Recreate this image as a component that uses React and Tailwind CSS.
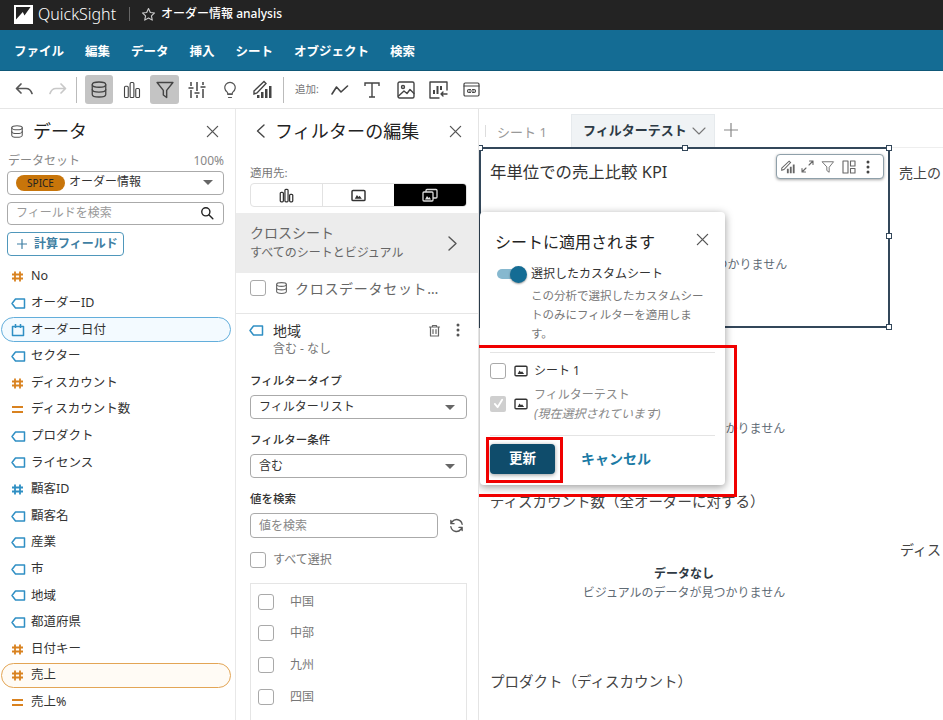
import React from "react";

const S = ({ w = 18, h = 18, vb = "0 0 24 24", c = "#444", sw = 2, children, className = "" }) => (
  <svg width={w} height={h} viewBox={vb} fill="none" stroke={c} strokeWidth={sw} strokeLinecap="round" strokeLinejoin="round" className={`shrink-0 ${className}`}>
    {children}
  </svg>
);

const Db = ({ w = 16, h = 16, c = "#555", sw = 1.8 }) => (
  <S w={w} h={h} c={c} sw={sw}>
    <ellipse cx="12" cy="5.5" rx="9" ry="3.5" />
    <path d="M3 5.5v13c0 2 4 3.5 9 3.5s9-1.5 9-3.5v-13" />
    <path d="M3 12c0 2 4 3.5 9 3.5s9-1.5 9-3.5" />
  </S>
);
const Bars = ({ w = 18, h = 18, c = "#444", sw = 1.5 }) => (
  <S w={w} h={h} c={c} sw={sw}>
    <rect x="2" y="7" width="5" height="15" rx="1.5" />
    <rect x="9.5" y="2" width="5" height="20" rx="1.5" />
    <rect x="17" y="10" width="5" height="12" rx="1.5" />
  </S>
);
const Funnel = ({ w = 20, h = 20, c = "#444", sw = 1.7 }) => (
  <S w={w} h={h} c={c} sw={sw}>
    <path d="M2.500 3h19l-7.500 9.500V21l-4-3v-5.500z" />
  </S>
);
const Sheet = ({ w = 15, h = 13, c = "#333" }) => (
  <svg width={w} height={h} viewBox="0 0 16 14" className="shrink-0">
    <rect x="1" y="1.5" width="14" height="11" rx="1.2" fill="none" stroke={c} strokeWidth="1.6" />
    <path d="M4 10.5 6.3 6.5 8 8.6 9.2 7.4 11.6 10.5z" fill={c} />
  </svg>
);
const Close = ({ s = 13, c = "#555" }) => (
  <S w={s} h={s} c={c} sw={1.4} vb="0 0 14 14">
    <path d="M1.5 1.5l11 11M12.5 1.5l-11 11" />
  </S>
);
const Caret = () => <span className="ml-auto h-0 w-0 border-x-[5px] border-t-[5px] border-x-transparent border-t-[#666]" />;
const Box = ({ className = "" }) => <span className={`block h-4 w-4 shrink-0 rounded-[3px] border-[1.5px] border-[#a9a9a9] bg-white ${className}`} />;

const Tag = ({ c = "#2f8fc4" }) => (
  <S w={15} h={13} vb="0 0 15 13" c={c} sw={1.5}>
    <path d="M4.5 2h9v9h-9L1 6.5z" />
  </S>
);
const Hash = ({ c = "#d9821f" }) => (
  <S w={13} h={13} vb="0 0 13 13" c={c} sw={1.8}>
    <path d="M4 1.5v10M9 1.5v10M1 4.5h11M1 8.5h11" strokeLinecap="butt" />
  </S>
);
const Eq = () => (
  <S w={13} h={13} vb="0 0 13 13" c="#d9821f" sw={1.8}>
    <path d="M1 4h11M1 9h11" strokeLinecap="butt" />
  </S>
);
const Cal = () => (
  <S w={14} h={14} vb="0 0 14 14" c="#2f8fc4" sw={1.5}>
    <path d="M1.5 3.500h11v9h-11zM4.500 1v4M9.500 1v4" strokeLinecap="butt" />
  </S>
);

const fields = [
  ["No", "h"], ["オーダーID", "t"], ["オーダー日付", "d", "blue"], ["セクター", "t"], ["ディスカウント", "h"],
  ["ディスカウント数", "e"], ["プロダクト", "t"], ["ライセンス", "t"], ["顧客ID", "b"], ["顧客名", "t"], ["産業", "t"],
  ["市", "t"], ["地域", "t"], ["都道府県", "t"], ["日付キー", "h"], ["売上", "h", "orange"], ["売上%", "e"],
];
const icon = { h: <Hash />, t: <Tag />, d: <Cal />, b: <Hash c="#2f8fc4" />, e: <Eq /> };

function FieldRow({ name, type, hl }) {
  const cls =
    hl === "blue"
      ? "border border-[#63aedb] bg-[#f3faff] rounded-full"
      : hl === "orange"
        ? "border border-[#e3a555] bg-[#fffbf5] rounded-full"
        : "border border-transparent";
  return (
    <div className="flex h-[26.6px] items-center">
      <div className={`ml-px -mt-px flex h-[25px] w-[230px] items-center pl-[9px] ${cls}`}>
        <span className="flex w-[20px] justify-start">{icon[type]}</span>
        <span className="text-[12.5px] text-[#333]">{name}</span>
      </div>
    </div>
  );
}

function TopBar() {
  return (
    <>
      <div className="flex h-[30px] items-center bg-[#232323] pb-[2px] pl-[14px] text-white">
        <svg width="19" height="19" viewBox="0 0 19 19" className="shrink-0">
          <rect width="19" height="19" fill="#fff" />
          <path d="M2 2h14.500L10.500 10.500 8.800 7 2 14.500z" fill="#232323" />
        </svg>
        <span className="ml-[5px] text-[16px] font-light leading-none">QuickSight</span>
        <span className="ml-[13px] h-[14px] w-px bg-[#666]" />
        <svg width="15" height="15" viewBox="0 0 24 24" fill="none" stroke="#ccc" strokeWidth="1.8" strokeLinejoin="round" className="ml-[11px]">
          <path d="M12 2.5l2.9 6.2 6.8.8-5 4.7 1.3 6.8-6-3.4-6 3.4 1.3-6.8-5-4.7 6.8-.8z" />
        </svg>
        <span className="ml-[5px] text-[12px] font-medium">オーダー情報 analysis</span>
      </div>
      <div className="flex h-[41px] items-center gap-[21px] border-b border-[#0f5878] bg-[#146c94] pl-[14px] pt-[5px] text-[12.5px] font-bold text-white">
        {["ファイル", "編集", "データ", "挿入", "シート", "オブジェクト", "検索"].map((m) => (
          <span key={m}>{m}</span>
        ))}
      </div>
      <div className="flex h-[38px] items-center border-b border-[#e6e6e6] bg-white pl-[15px]">
        <S w={19} h={16} vb="0 0 19 16" c="#555" sw={1.7}><path d="M6 2 1.500 6.500 6 11M2 6.500h9c3 0 5 2 6 5" /></S>
        <S w={19} h={16} vb="0 0 19 16" c="#c8c8c8" sw={1.7} className="ml-[14px]"><path d="M13 2l4.500 4.500L13 11M17 6.500H8c-3 0-5 2-6 5" /></S>
        <span className="ml-[9px] h-[26px] w-px bg-[#bbb]" />
        <span className="ml-[8px] flex h-[29px] w-[28px] items-center justify-center rounded-[3px] bg-[#c4c4c4]"><Db w={18} h={19} c="#444" sw={1.7} /></span>
        <span className="ml-[10px]"><Bars /></span>
        <span className="ml-[9px] flex h-[29px] w-[29px] items-center justify-center rounded-[3px] bg-[#c4c4c4]"><Funnel /></span>
        <svg width="18" height="18" viewBox="0 0 18 18" className="ml-[9px] shrink-0" fill="none" stroke="#444" strokeWidth="1.500" strokeLinecap="butt">
          <path d="M3 1v4M3 9v8M9 1v9M9 14v3M15 1v3M15 8v9M.5 7h5M6.500 12h5M12.500 6h5" />
        </svg>
        <S w={18} h={20} c="#555" sw={1.6} className="ml-[15px]"><path d="M9 18h6M10 22h4M8 14.500A7 7 0 1 1 16 14.500c-.7.7-1 1.500-1 2.500H9c0-1-.3-1.800-1-2.500z" /></S>
        <svg width="19" height="19" viewBox="0 0 19 19" className="ml-[14px] shrink-0">
          <path d="M1 11 11 1.500l2 2L4 13l-3 1z" fill="none" stroke="#444" strokeWidth="1.4" />
          <path d="M8 12h2.500v6H8zM12 9h2.500v9H12zM16 6h2.500v12H16zM4 15h2.500v3H4z" fill="#444" />
        </svg>
        <span className="ml-[11px] h-[26px] w-px bg-[#bbb]" />
        <span className="ml-[11px] text-[10.5px] text-[#777]">追加:</span>
        <S w={18} h={12} vb="0 0 18 12" c="#444" sw={1.6} className="ml-[12px]"><path d="M1 10 5.500 3 10 8l6.500-6" /></S>
        <svg width="16" height="16" viewBox="0 0 16 16" className="ml-[15px] shrink-0" fill="none" stroke="#444" strokeWidth="1.4"><path d="M1 4V1h14v3M8 1v14M5 15h6" /></svg>
        <S w={18} h={18} vb="0 0 18 18" c="#444" sw={1.4} className="ml-[17px]"><rect x="1" y="1" width="16" height="16" rx="1.500" /><circle cx="6" cy="6" r="1.500" /><path d="M1.500 15 7 10l3 2.500 3-4 4 4" /></S>
        <S w={19} h={18} vb="0 0 19 18" c="#444" sw={1.4} className="ml-[14px]"><path d="M18 9V1H1v16h9" /><path d="M5 13V9M8.500 13V5M12 9V5" strokeWidth="2" strokeLinecap="butt" /><path d="M18 13h-6M14 11l-2 2 2 2" /></S>
        <S w={17} h={15} vb="0 0 17 15" c="#444" sw={1.2} className="ml-[15px]"><rect x="1" y="1" width="15" height="13" rx="1.200" /><path d="M1 4h15" /><path d="M7.500 7.500H6a1.500 1.500 0 0 0 0 3h1.500M9.500 7.500H11a1.500 1.500 0 0 1 0 3H9.500M6.500 9h4" /></S>
      </div>
    </>
  );
}

function DataPanel() {
  return (
    <aside className="w-[236px] shrink-0 overflow-hidden border-r border-[#e8e8e8] bg-white">
      <div className="flex h-[44px] items-center pl-[10px] pr-[16px]">
        <Db w={14} h={15} />
        <span className="ml-[9px] text-[18px] leading-none text-[#222]">データ</span>
        <span className="ml-auto"><Close /></span>
      </div>
      <div className="mx-[8px] flex h-[16px] w-[216px] items-center justify-between text-[12px] text-[#888]">
        <span>データセット</span><span>100%</span>
      </div>
      <div className="ml-[7px] mt-[2px] flex h-[24px] w-[217px] items-center rounded-[4px] border border-[#aaa] pb-[2px] pl-[8px] pr-[10px]">
        <span className="mt-[2px] flex h-[16px] w-[49px] items-center justify-center rounded-full bg-[#c8750a] text-[10px] text-[#222]">SPICE</span>
        <span className="ml-[4px] text-[12px] text-[#333]">オーダー情報</span>
        <Caret />
      </div>
      <div className="ml-[7px] mt-[7px] flex h-[23px] w-[217px] items-center rounded-[4px] border border-[#aaa] pb-[1px] pl-[8px] pr-[9px]">
        <span className="text-[12px] text-[#999]">フィールドを検索</span>
        <S w={14} h={14} c="#222" sw={2.4} className="ml-auto"><circle cx="10" cy="10" r="7" /><path d="M15.500 15.500 22 22" /></S>
      </div>
      <div className="ml-[7px] mt-[7px] flex h-[24px] w-[117px] items-center rounded-[4px] border border-[#4f97bb] pb-[1px] pl-[9px] text-[12px] font-bold text-[#3f7fa3]">
        <S w={10} h={10} vb="0 0 10 10" c="#3f7fa3" sw={1.200}><path d="M5 .5v9M.5 5h9" /></S>
        <span className="ml-[7px]">計算フィールド</span>
      </div>
      <div className="mt-[8px]">
        {fields.map(([n, t, hl]) => <FieldRow key={n} name={n} type={t} hl={hl} />)}
      </div>
    </aside>
  );
}

function SelectBox({ text, className = "" }) {
  return (
    <div className={`ml-[14px] flex h-[24px] w-[217px] items-center rounded-[4px] border border-[#aaa] pl-[8px] pr-[11px] text-[12px] text-[#333] ${className}`}>
      <span>{text}</span><Caret />
    </div>
  );
}

function FilterPanel() {
  return (
    <aside className="w-[243px] shrink-0 overflow-hidden border-r border-[#e4e4e4] bg-white">
      <div className="flex h-[44px] items-center pl-[20px] pr-[16px]">
        <S w={9} h={14} vb="0 0 9 14" c="#444" sw={1.400}><path d="M8 1 1.500 7 8 13" /></S>
        <span className="ml-[10px] text-[18px] leading-none tracking-[0.1px] text-[#222]">フィルターの編集</span>
        <span className="ml-auto"><Close /></span>
      </div>
      <div className="ml-[14px] mt-[12px] text-[11.5px] leading-[16px] text-[#777]">適用先:</div>
      <div className="ml-[14px] mt-[2px] flex h-[24px] w-[217px] overflow-hidden rounded-[4px] border border-[#e2e2e2]">
        <span className="flex w-[72px] items-center justify-center border-r border-[#e2e2e2]"><Bars w={15} h={15} c="#333" sw={2} /></span>
        <span className="flex w-[71px] items-center justify-center"><Sheet /></span>
        <span className="flex flex-1 items-center justify-center bg-black">
          <svg width="16" height="14" viewBox="0 0 16 14" fill="none" stroke="#ddd" strokeWidth="1.300"><rect x="1" y="4" width="10" height="9" rx="1" /><path d="M4 4V2.500a1 1 0 0 1 1-1h9a1 1 0 0 1 1 1V9a1 1 0 0 1-1 1h-3" /><path d="M3 11.500 5 8l1.500 2 1-1 1.500 2.500z" fill="#ddd" stroke="none" /></svg>
        </span>
      </div>
      <div className="mt-[6px] flex h-[60px] items-center bg-[#ececec] pl-[14px] pr-[21px]">
        <div>
          <div className="text-[14px] leading-[20px] text-[#666]">クロスシート</div>
          <div className="text-[12px] leading-[20px] text-[#666]">すべてのシートとビジュアル</div>
        </div>
        <S w={9} h={15} vb="0 0 9 15" c="#555" sw={1.400} className="ml-auto"><path d="M1 1l7 6.500L1 14" /></S>
      </div>
      <div className="ml-[14px] mt-[6px] flex h-[18px] items-center">
        <Box />
        <span className="ml-[9px]"><Db w={13} h={14} c="#666" sw={2} /></span>
        <span className="ml-[7px] whitespace-nowrap text-[14px] tracking-[0.7px] text-[#666]">クロスデータセット…</span>
      </div>
      <div className="mt-[16px] h-px bg-[#e6e6e6]" />
      <div className="h-[50px] pl-[13px] pr-[18px] pt-[6px]">
        <div className="flex h-[20px] items-center">
          <Tag />
          <span className="ml-[9px] whitespace-nowrap text-[14px] text-[#333]">地域</span>
          <S w={13} h={13} vb="0 0 13 13" c="#666" sw={1.200} className="ml-auto"><path d="M1.500 3h10M4.500 3V1.500h4V3M2.500 3v9h8V3M5 5.500v4M8 5.500v4" /></S>
          <svg width="4" height="14" viewBox="0 0 4 14" className="ml-[15px] shrink-0" fill="#555"><circle cx="2" cy="2" r="1.500" /><circle cx="2" cy="7" r="1.500" /><circle cx="2" cy="12" r="1.500" /></svg>
        </div>
        <div className="ml-[24px] text-[12px] leading-[18px] text-[#777]">含む - なし</div>
      </div>
      <div className="ml-[14px] mt-[9px] text-[11.5px] font-medium leading-[16px] text-[#333]">フィルタータイプ</div>
      <SelectBox text="フィルターリスト" className="mt-[6px]" />
      <div className="ml-[14px] mt-[13px] text-[11.5px] font-medium leading-[16px] text-[#333]">フィルター条件</div>
      <SelectBox text="含む" className="mt-[6px]" />
      <div className="ml-[14px] mt-[13px] text-[11.5px] font-medium leading-[16px] text-[#333]">値を検索</div>
      <div className="ml-[14px] mt-[6px] flex w-[217px] items-center">
        <div className="flex h-[25px] w-[188px] items-center rounded-[4px] border border-[#aaa] pl-[8px] text-[12px] text-[#888]">値を検索</div>
        <S w={15} h={15} c="#555" sw={2.200} className="ml-[11px]"><path d="M21 10A9 9 0 0 0 5 6l-2 3M3 14a9 9 0 0 0 16 4l2-3M3 4v5h5M21 20v-5h-5" /></S>
      </div>
      <div className="ml-[14px] mt-[14px] flex h-[16px] items-center">
        <Box />
        <span className="ml-[7px] text-[12px] text-[#777]">すべて選択</span>
      </div>
      <div className="ml-[14px] mt-[15px] h-[160px] w-[217px] border border-[#e5e5e5] pl-[7px] pt-[9.500px]">
        {["中国", "中部", "九州", "四国"].map((v) => (
          <div key={v} className="mb-[15.7px] flex h-[16px] items-center">
            <Box />
            <span className="ml-[16px] text-[12px] text-[#777]">{v}</span>
          </div>
        ))}
      </div>
    </aside>
  );
}

function NoData({ y }) {
  return (
    <div className="absolute left-[102px] w-[206px] text-center" style={{ top: y }}>
      <div className="text-[12px] font-bold leading-[19px] text-[#2f3a44]">データなし</div>
      <div className="text-[12px] leading-[19px] text-[#5f6b75]">ビジュアルのデータが見つかりません</div>
    </div>
  );
}

function Handle({ className }) {
  return <span className={`absolute h-[6px] w-[6px] border border-[#33475a] bg-white ${className}`} />;
}

function Popup() {
  return (
    <div className="absolute left-[1px] top-[103px] h-[273px] w-[245px] rounded-[4px] bg-white shadow-[0_2px_8px_rgba(0,0,0,0.4)]">
      <div className="flex h-[52px] items-center pl-[15px] pr-[16px] pt-[8px]">
        <span className="text-[16px] leading-none text-[#222]">シートに適用されます</span>
        <span className="-mt-[6px] ml-auto"><Close /></span>
      </div>
      <div className="ml-[17px] flex h-[20px] items-center">
        <span className="relative h-[10px] w-[24px] rounded-full bg-[#86b8cf]">
          <span className="absolute -right-[6px] -top-[3.500px] h-[17px] w-[17px] rounded-full bg-[#146c94] shadow-[0_1px_2px_rgba(0,0,0,0.4)]" />
        </span>
        <span className="ml-[10px] text-[12px] text-[#333]">選択したカスタムシート</span>
      </div>
      <div className="ml-[51px] mt-[1.500px] w-[176px] text-[11.500px] leading-[19px] text-[#777]">この分析で選択したカスタムシートのみにフィルターを適用します。</div>
      <div className="mx-[10px] mt-[9px] h-px bg-[#e4e4e4]" />
      <div className="ml-[10px] mt-[10px] flex h-[16px] items-center">
        <Box />
        <span className="ml-[8px]"><Sheet w={14} h={12} /></span>
        <span className="ml-[6px] text-[12px] text-[#333]">シート 1</span>
      </div>
      <div className="ml-[10px] mt-[6px] flex h-[38px] items-center">
        <span className="flex h-4 w-4 items-center justify-center rounded-[2px] bg-[#cfcfcf]">
          <S w={11} h={11} vb="0 0 12 12" c="#fff" sw={2}><path d="M2 6.500 5 10l5-8" /></S>
        </span>
        <span className="ml-[8px]"><Sheet w={14} h={12} /></span>
        <div className="ml-[6px] text-[12px] leading-[19px] text-[#888]">
          <div>フィルターテスト</div>
          <div className="italic">(現在選択されています)</div>
        </div>
      </div>
      <div className="mx-[10px] mt-[12px] h-px bg-[#e4e4e4]" />
      <div className="ml-[10px] mt-[8px] flex items-center">
        <span className="flex h-[30px] w-[65px] items-center justify-center rounded-[4px] bg-[#0f4c6b] text-[13.500px] font-bold text-white shadow-[0_1px_4px_rgba(0,0,0,0.4)]">更新</span>
        <span className="ml-[26px] text-[14px] font-bold text-[#1c7ba5]">キャンセル</span>
      </div>
    </div>
  );
}

function Canvas() {
  return (
    <main className="relative min-w-0 flex-1 overflow-hidden bg-white">
      <div className="flex h-[39px] items-end border-b border-[#eee] pt-[5px]">
        <span className="mb-[10px] ml-[6px] h-[12px] w-px bg-[#ddd]" />
        <span className="mb-[5px] ml-[11px] w-[74px] text-[13px] text-[#999]">シート 1</span>
        <div className="flex h-[33px] w-[144px] items-center border-x border-t border-[#e6eaed] bg-[#f0f3f5] pl-[11px]">
          <span className="text-[13px] font-bold text-[#2d3a45]">フィルターテスト</span>
          <S w={14} h={8} vb="0 0 14 8" c="#777" sw={1.100} className="ml-[5px]"><path d="M1 1l6 6 6-6" /></S>
        </div>
        <S w={14} h={14} vb="0 0 14 14" c="#888" sw={1.200} className="mb-[10px] ml-[9px]"><path d="M7 0v14M0 7h14" /></S>
      </div>

      <div className="absolute left-0 top-[38px] h-[181px] w-[411px] border-2 border-[#33475a] bg-white">
        <Handle className="-left-[4px] -top-[4px]" />
        <Handle className="left-[201px] -top-[4px]" />
        <Handle className="-right-[4px] -top-[4px]" />
        <Handle className="-right-[4px] top-[84px]" />
        <Handle className="-right-[4px] -bottom-[4px]" />
        <Handle className="left-[201px] -bottom-[4px]" />
        <div className="ml-[9px] mt-[12px] whitespace-nowrap text-[16.400px] leading-[22px] text-[#333]">年単位での売上比較 KPI</div>
        <div className="absolute left-[295px] top-[5px] flex h-[25px] w-[108px] items-center rounded-[4px] border border-[#8fa0aa] bg-white pl-[4px] shadow-[0_1px_3px_rgba(0,0,0,0.35)]">
          <svg width="14" height="14" viewBox="0 0 19 19" className="shrink-0"><path d="M1 11 11 1.500l2 2L4 13l-3 1z" fill="none" stroke="#666" strokeWidth="1.400" /><path d="M8 12h2.500v6H8zM12 9h2.500v9H12zM16 6h2.500v12H16z" fill="#666" /></svg>
          <S w={13} h={13} vb="0 0 13 13" c="#666" sw={1.100} className="ml-[6px]"><path d="M1 12l4-4M8 5l4-4M8.500 1H12v3.500M1 8.500V12h3.500" /></S>
          <span className="ml-[7px]"><Funnel w={14} h={14} c="#666" sw={1.500} /></span>
          <S w={14} h={14} vb="0 0 14 14" c="#666" sw={1.100} className="ml-[7px]"><rect x="1" y="1" width="5" height="12" /><rect x="8.500" y="1" width="4.500" height="5" /><rect x="8.500" y="8.500" width="4.500" height="4.500" /></S>
          <svg width="4" height="14" viewBox="0 0 4 14" className="ml-[10px]" fill="#444"><circle cx="2" cy="2" r="1.500" /><circle cx="2" cy="7" r="1.500" /><circle cx="2" cy="12" r="1.500" /></svg>
        </div>
        <NoData y={87} />
      </div>

      <div className="absolute left-[420px] top-[54px] whitespace-nowrap text-[14px] leading-[20px] text-[#444]">売上の</div>
      <NoData y={291} />
      <div className="absolute left-[11px] top-[382px] whitespace-nowrap text-[14.500px] leading-[20px] text-[#444]">ディスカウント数（全オーダーに対する）</div>
      <div className="absolute left-[421px] top-[431px] whitespace-nowrap text-[14px] leading-[20px] text-[#444]">ディス</div>
      <NoData y={455} />
      <div className="absolute left-[11px] top-[562px] whitespace-nowrap text-[14.500px] leading-[20px] text-[#444]">プロダクト（ディスカウント）</div>

      <Popup />

      <div className="absolute left-[-8px] top-[236px] h-[152px] w-[266px] border-[3.500px] border-[#f00000]" />
      <div className="absolute left-[7px] top-[328px] h-[46px] w-[77px] border-[3.500px] border-[#f00000]" />
    </main>
  );
}

export default function App() {
  return (
    <div className="flex h-screen w-full flex-col overflow-hidden bg-white font-['Noto_Sans','Noto_Sans_CJK_JP',sans-serif]">
      <TopBar />
      <div className="flex min-h-0 flex-1">
        <DataPanel />
        <FilterPanel />
        <Canvas />
      </div>
    </div>
  );
}
